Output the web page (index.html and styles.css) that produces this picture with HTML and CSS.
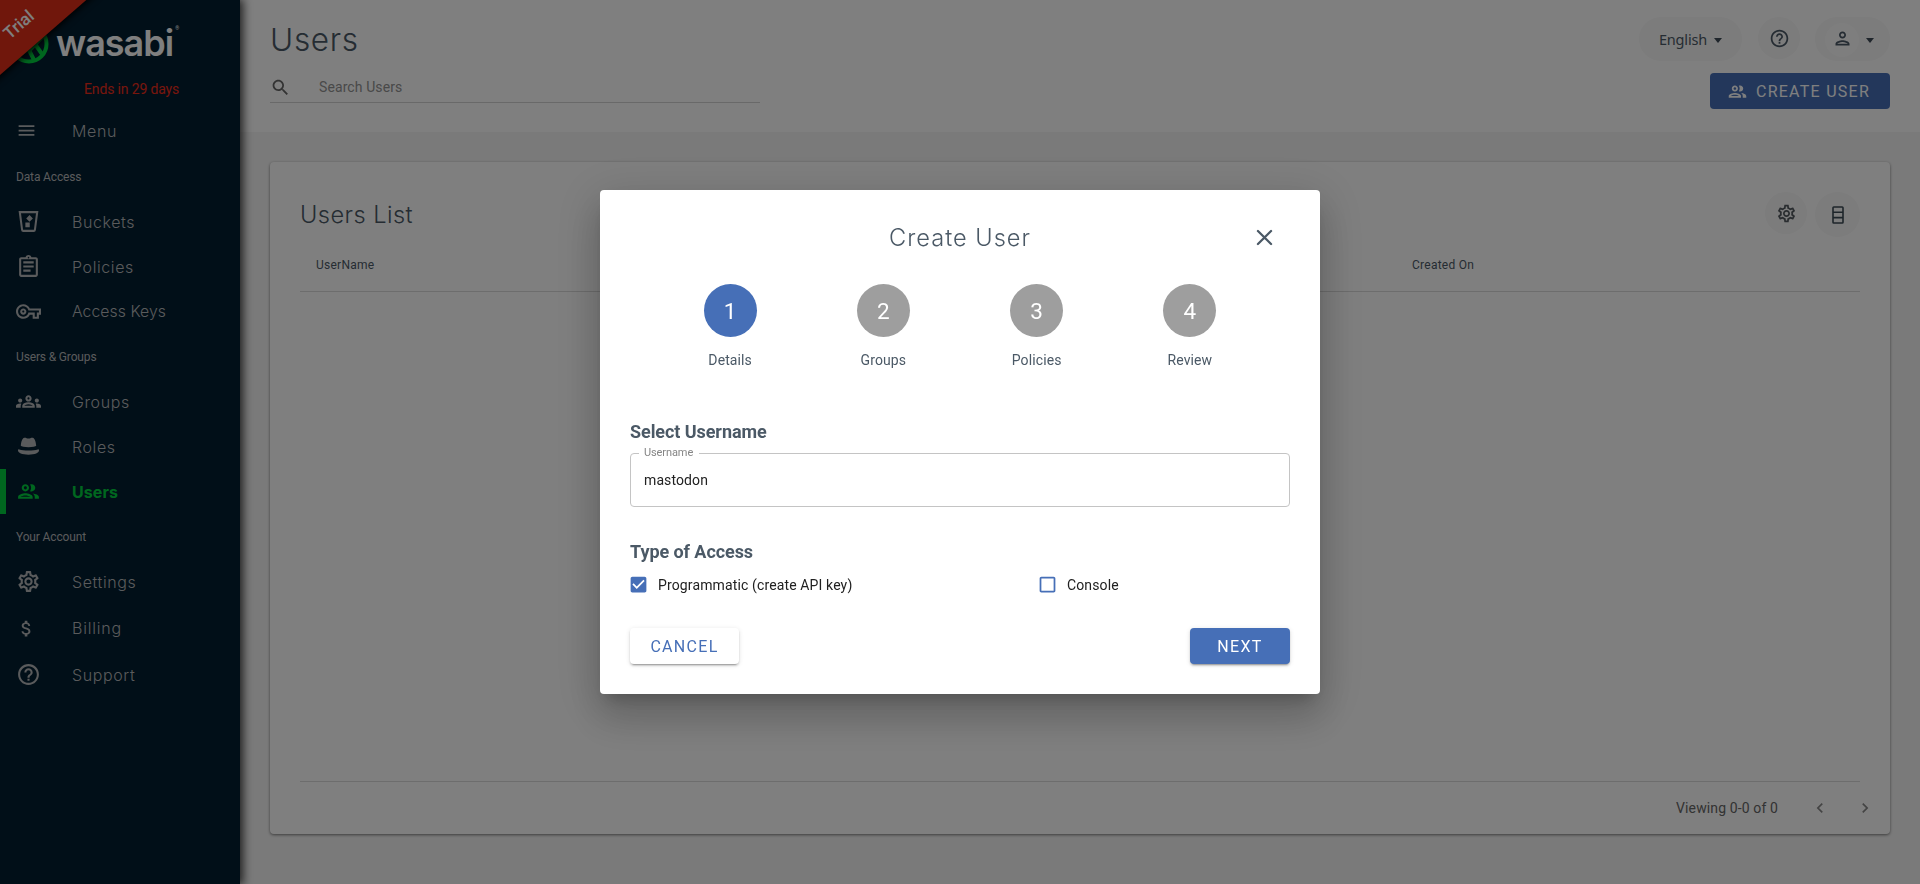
FILE: index.html
```html
<!DOCTYPE html>
<html lang="en">
<head>
<meta charset="utf-8">
<title>Wasabi Console - Users</title>
<link rel="stylesheet" href="styles.css">
</head>
<body>
<svg class="defs" aria-hidden="true">
  <symbol id="i-menu" viewBox="0 0 24 24"><path d="M3 18h18v-2H3v2zm0-5h18v-2H3v2zm0-7v2h18V6H3z"/></symbol>
  <symbol id="i-bucket" viewBox="0 0 24 24"><path fill-rule="evenodd" d="M2.500 2h19l-2.400 18.200a2 2 0 0 1-2 1.800H6.900a2 2 0 0 1-2-1.800zM4.800 4l2 16h10.400l2-16z"/><path d="M13 5.800l3.200 3.200L13 12.200 9.800 9zM9 13h4.200v4.500H9z"/></symbol>
  <symbol id="i-policy" viewBox="0 0 24 24"><path d="M7 15h7v2H7zm0-4h10v2H7zm0-4h10v2H7zm12-4h-4.180C14.400 1.840 13.300 1 12 1s-2.400.840-2.820 2H5c-1.100 0-2 .9-2 2v15c0 1.100.9 2 2 2h14c1.100 0 2-.9 2-2V5c0-1.100-.9-2-2-2zm-7-.250c.410 0 .750.340.750.750s-.340.750-.750.750-.750-.340-.750-.750.340-.750.750-.750zM19 20H5V5h14v15z"/></symbol>
  <symbol id="i-key" viewBox="0 0 24 24"><path d="M22 19h-6v-4h-2.680c-1.140 2.420-3.600 4-6.320 4-3.860 0-7-3.140-7-7s3.140-7 7-7c2.720 0 5.170 1.580 6.320 4H24v6h-2v4zm-4-2h2v-4h2v-2H11.940l-.230-.670C11.010 8.340 9.110 7 7 7c-2.760 0-5 2.240-5 5s2.240 5 5 5c2.110 0 4.010-1.340 4.710-3.330l.230-.670H18v4zM7 15c-1.650 0-3-1.350-3-3s1.350-3 3-3 3 1.350 3 3-1.350 3-3 3zm0-4c-.550 0-1 .450-1 1s.450 1 1 1 1-.450 1-1-.450-1-1-1z"/></symbol>
  <symbol id="i-groups" viewBox="0 0 24 24"><path d="M4 13c1.100 0 2-.9 2-2s-.9-2-2-2-2 .9-2 2 .9 2 2 2zm1.130 1.100C4.760 14.040 4.390 14 4 14c-.990 0-1.930.210-2.780.580C.480 14.900 0 15.620 0 16.430V18h4.500v-1.610c0-.830.230-1.610.630-2.290zM20 13c1.100 0 2-.9 2-2s-.9-2-2-2-2 .9-2 2 .9 2 2 2zm4 3.430c0-.810-.480-1.530-1.220-1.850C21.930 14.210 20.990 14 20 14c-.390 0-.760.040-1.130.1.400.680.630 1.460.630 2.290V18H24v-1.570zm-7.760-2.780C15.070 13.130 13.630 12.750 12 12.750s-3.070.390-4.240.9C6.680 14.130 6 15.210 6 16.390V18h12v-1.610c0-1.180-.680-2.260-1.760-2.740zM8.070 16c.090-.230.130-.390.910-.690.970-.380 1.990-.560 3.020-.560s2.050.180 3.020.560c.770.300.810.460.910.690H8.070zM12 8c.550 0 1 .450 1 1s-.450 1-1 1-1-.450-1-1 .450-1 1-1m0-2c-1.660 0-3 1.340-3 3s1.340 3 3 3 3-1.340 3-3-1.340-3-3-3z"/></symbol>
  <symbol id="i-hat" viewBox="0 0 24 24"><path d="M4.600 11.200C5 7.500 5.900 4.200 7.900 3.700c1.600-.3 2.500.7 4.100.7s2.500-1 4.100-.7c2 .5 2.900 3.800 3.300 7.500-.5.800-3.500 1.400-7.400 1.400s-6.900-.6-7.400-1.400zM3.100 14.800c2.300.7 5.300 1.100 8.900 1.100s6.600-.4 8.900-1.100c.8-.2 1.200.2 1.200.8.100 2.500-3.900 4.200-10.100 4.200S1.800 18.100 1.900 15.600c0-.6.400-1 1.200-.8z"/></symbol>
  <symbol id="i-users" viewBox="0 0 24 24"><path d="M9 12c1.930 0 3.500-1.570 3.500-3.500S10.930 5 9 5 5.500 6.570 5.500 8.500 7.070 12 9 12zm0-5c.830 0 1.500.670 1.500 1.500S9.830 10 9 10s-1.500-.670-1.500-1.500S8.170 7 9 7zm0 6.750c-2.340 0-7 1.170-7 3.500V19h14v-1.750c0-2.330-4.660-3.500-7-3.500zM4.340 17c.840-.580 2.870-1.250 4.660-1.250s3.820.670 4.660 1.250H4.340zm11.700-3.190c1.160.840 1.960 1.960 1.960 3.440V19h4v-1.750c0-2.020-3.500-3.170-5.960-3.440zM15 12c1.930 0 3.500-1.570 3.500-3.500S16.930 5 15 5c-.540 0-1.040.130-1.500.350.630.890 1 1.980 1 3.150s-.370 2.260-1 3.150c.460.220.960.350 1.500.350z"/></symbol>
  <symbol id="i-gear" viewBox="0 0 24 24"><path d="M19.430 12.980c.040-.320.070-.640.070-.980s-.030-.660-.070-.980l2.110-1.650c.190-.150.240-.420.120-.640l-2-3.460c-.090-.160-.260-.250-.440-.250-.060 0-.120.010-.170.030l-2.490 1c-.520-.400-1.080-.730-1.690-.980l-.380-2.650C14.460 2.180 14.250 2 14 2h-4c-.250 0-.460.180-.490.420l-.380 2.650c-.610.250-1.170.590-1.690.980l-2.490-1c-.060-.020-.120-.030-.180-.030-.170 0-.340.090-.430.250l-2 3.460c-.130.220-.070.490.120.640l2.110 1.650c-.040.320-.070.650-.070.980s.030.660.070.980l-2.110 1.650c-.190.150-.240.420-.120.640l2 3.460c.090.160.260.250.440.250.060 0 .120-.010.170-.030l2.490-1c.520.400 1.080.730 1.690.980l.380 2.650c.030.240.240.420.490.420h4c.250 0 .460-.180.490-.420l.380-2.650c.610-.250 1.170-.590 1.690-.980l2.490 1c.060.020.120.030.180.030.170 0 .340-.090.430-.250l2-3.460c.120-.220.070-.490-.120-.640l-2.110-1.650zm-1.980-1.710c.040.310.050.520.050.730 0 .210-.020.430-.050.730l-.140 1.130.890.700 1.080.840-.7 1.210-1.270-.510-1.040-.420-.9.680c-.430.320-.840.560-1.250.730l-1.060.430-.160 1.130-.200 1.350h-1.400l-.190-1.350-.160-1.130-1.060-.430c-.430-.180-.830-.410-1.230-.710l-.910-.7-1.060.430-1.270.510-.7-1.210 1.080-.840.890-.7-.140-1.130c-.030-.310-.050-.540-.050-.740s.020-.430.050-.730l.140-1.130-.890-.7-1.080-.840.7-1.210 1.270.510 1.040.420.900-.680c.430-.320.840-.560 1.250-.730l1.060-.430.160-1.130.200-1.350h1.390l.190 1.350.160 1.130 1.060.430c.430.180.830.410 1.230.710l.910.7 1.060-.430 1.270-.510.7 1.210-1.070.850-.890.7.140 1.130zM12 8c-2.210 0-4 1.790-4 4s1.790 4 4 4 4-1.790 4-4-1.790-4-4-4zm0 6c-1.100 0-2-.9-2-2s.9-2 2-2 2 .9 2 2-.9 2-2 2z"/></symbol>
  <symbol id="i-dollar" viewBox="0 0 24 24"><path d="M11.800 10.900c-2.270-.590-3-1.200-3-2.150 0-1.090 1.010-1.850 2.700-1.850 1.780 0 2.440.850 2.500 2.100h2.210c-.070-1.720-1.120-3.300-3.210-3.810V3h-3v2.160c-1.940.420-3.500 1.680-3.500 3.610 0 2.310 1.910 3.460 4.700 4.130 2.500.6 3 1.480 3 2.410 0 .690-.490 1.790-2.700 1.790-2.060 0-2.870-.920-2.980-2.100h-2.200c.120 2.190 1.760 3.420 3.680 3.830V21h3v-2.150c1.950-.370 3.500-1.500 3.500-3.550 0-2.840-2.430-3.810-4.700-4.400z"/></symbol>
  <symbol id="i-help" viewBox="0 0 24 24"><path d="M11 18h2v-2h-2v2zm1-16C6.480 2 2 6.480 2 12s4.480 10 10 10 10-4.480 10-10S17.520 2 12 2zm0 18c-4.410 0-8-3.590-8-8s3.590-8 8-8 8 3.590 8 8-3.590 8-8 8zm0-14c-2.210 0-4 1.790-4 4h2c0-1.100.9-2 2-2s2 .9 2 2c0 2-3 1.750-3 5h2c0-2.250 3-2.500 3-5 0-2.210-1.790-4-4-4z"/></symbol>
  <symbol id="i-search" viewBox="0 0 24 24"><path d="M15.500 14h-.790l-.280-.270C15.410 12.590 16 11.110 16 9.500 16 5.910 13.090 3 9.500 3S3 5.910 3 9.500 5.910 16 9.500 16c1.610 0 3.090-.590 4.230-1.570l.270.280v.790l5 4.990L20.490 19l-4.990-5zm-6 0C7.010 14 5 11.990 5 9.500S7.010 5 9.500 5 14 7.010 14 9.500 11.990 14 9.500 14z"/></symbol>
  <symbol id="i-person" viewBox="0 0 24 24"><path d="M12 6c1.100 0 2 .9 2 2s-.9 2-2 2-2-.9-2-2 .9-2 2-2m0 10c2.700 0 5.800 1.290 6 2H6c.230-.720 3.310-2 6-2m0-12C9.790 4 8 5.790 8 8s1.790 4 4 4 4-1.790 4-4-1.790-4-4-4zm0 10c-2.670 0-8 1.340-8 4v2h16v-2c0-2.660-5.330-4-8-4z"/></symbol>
  <symbol id="i-left" viewBox="0 0 24 24"><path d="M15.410 7.410L14 6l-6 6 6 6 1.410-1.410L10.830 12z"/></symbol>
  <symbol id="i-right" viewBox="0 0 24 24"><path d="M10 6L8.590 7.410 13.170 12l-4.580 4.590L10 18l6-6z"/></symbol>
  <symbol id="i-close" viewBox="0 0 24 24"><path d="M4.500 4.500l15 15M19.500 4.500l-15 15" stroke="currentColor" stroke-width="2.600" stroke-linecap="round"/></symbol>
  <symbol id="i-checked" viewBox="0 0 24 24"><path d="M19 3H5c-1.110 0-2 .9-2 2v14c0 1.100.890 2 2 2h14c1.110 0 2-.9 2-2V5c0-1.100-.890-2-2-2zm-9 14l-5-5 1.410-1.410L10 14.170l7.590-7.590L19 8l-9 9z"/></symbol>
  <symbol id="i-unchecked" viewBox="0 0 24 24"><path d="M19 5v14H5V5h14m0-2H5c-1.100 0-2 .9-2 2v14c0 1.100.9 2 2 2h14c1.100 0 2-.9 2-2V5c0-1.100-.9-2-2-2z"/></symbol>
</svg>

<div class="app">
  <nav class="sidebar">
    <div class="brand">
      <svg class="brand-mark" viewBox="0 0 40 40"><circle cx="20" cy="20" r="17.500"/><path d="M20 3v12M20 24L7 34M19 24l6 12M26 20l7 10M21 26l15-16M30 6v10"/></svg>
      <span class="brand-name">wasabi</span><span class="brand-reg">®</span>
    </div>
    <div class="ends">Ends in 29 days</div>
    <a class="item menu"><svg class="icon small"><use href="#i-menu"/></svg><span>Menu</span></a>
    <h6 class="section">Data Access</h6>
    <a class="item"><svg class="icon"><use href="#i-bucket"/></svg><span>Buckets</span></a>
    <a class="item"><svg class="icon"><use href="#i-policy"/></svg><span>Policies</span></a>
    <a class="item tight"><svg class="icon"><use href="#i-key"/></svg><span>Access Keys</span></a>
    <h6 class="section">Users &amp; Groups</h6>
    <a class="item"><svg class="icon"><use href="#i-groups"/></svg><span>Groups</span></a>
    <a class="item"><svg class="icon"><use href="#i-hat"/></svg><span>Roles</span></a>
    <a class="item active"><svg class="icon"><use href="#i-users"/></svg><span>Users</span></a>
    <h6 class="section">Your Account</h6>
    <a class="item"><svg class="icon"><use href="#i-gear"/></svg><span>Settings</span></a>
    <a class="item billing"><svg class="icon small"><use href="#i-dollar"/></svg><span>Billing</span></a>
    <a class="item"><svg class="icon"><use href="#i-help"/></svg><span>Support</span></a>
    <div class="ribbon"><span>Trial</span></div>
  </nav>

  <main class="main">
    <header class="header">
      <div class="header-left">
        <h1>Users</h1>
        <div class="search"><svg class="search-icon"><use href="#i-search"/></svg><span>Search Users</span></div>
      </div>
      <div class="header-right">
        <div class="tools">
          <div class="pill lang">English<i class="caret"></i></div>
          <div class="pill help"><svg><use href="#i-help"/></svg></div>
          <div class="pill account"><span class="avatar"><svg><use href="#i-person"/></svg></span><i class="caret"></i></div>
        </div>
        <button class="create"><svg><use href="#i-users"/></svg>CREATE USER</button>
      </div>
    </header>

    <section class="card">
      <div class="card-head">
        <h2>Users List</h2>
        <div class="card-tools">
          <span class="round gear"><svg><use href="#i-gear"/></svg></span>
          <span class="round rows"><svg viewBox="0 0 12 18"><path d="M1.800 1h8.400q.8 0 .8.8v14.400q0 .8-.8.8H1.800q-.8 0-.8-.8V1.800q0-.8.8-.8zM1 6.200h10M1 11.600h10"/></svg></span>
        </div>
      </div>
      <div class="columns"><span>UserName</span><span>Created On</span></div>
      <div class="rows-empty"></div>
      <footer class="pager"><span>Viewing 0-0 of 0</span><svg><use href="#i-left"/></svg><svg><use href="#i-right"/></svg></footer>
    </section>
  </main>
</div>

<div class="overlay">
  <div class="dialog">
    <div class="dialog-head"><h2>Create User</h2><svg class="close"><use href="#i-close"/></svg></div>
    <ol class="steps">
      <li class="current"><b>1</b><span>Details</span></li>
      <li><b>2</b><span>Groups</span></li>
      <li><b>3</b><span>Policies</span></li>
      <li><b>4</b><span>Review</span></li>
    </ol>
    <h3>Select Username</h3>
    <fieldset class="field"><legend>Username</legend><div>mastodon</div></fieldset>
    <h3 class="access">Type of Access</h3>
    <div class="checks">
      <label><svg><use href="#i-checked"/></svg>Programmatic (create API key)</label>
      <label><svg><use href="#i-unchecked"/></svg>Console</label>
    </div>
    <div class="actions"><button class="cancel">CANCEL</button><button class="next">NEXT</button></div>
  </div>
</div>
</body>
</html>
```
FILE: styles.css
```css
* { box-sizing: border-box; }
body { margin: 0; font-family: Roboto, sans-serif; font-size: 14px; color: #212121; overflow: hidden; }
h1, h2, h3, h6, ol { margin: 0; padding: 0; font-weight: 400; }
svg { display: block; fill: currentColor; flex: none; }
button { font: inherit; border: 0; padding: 0; }
.defs { position: absolute; width: 0; height: 0; }

.app { display: flex; height: 884px; background: #f5f5f5; }

/* Sidebar */
.sidebar { position: relative; z-index: 1; width: 240px; flex: none; overflow: hidden; background: #031e30; color: #b4b6b8; }
.app::before { content: ""; position: absolute; left: 0; top: 0; width: 240px; height: 884px; box-shadow: 2px 0 9px 1px rgba(0, 0, 0, .75); }
.brand { display: flex; height: 64px; padding: 24px 0 0 9px; color: #fff; }
.brand-mark { width: 40px; height: 40px; fill: none; stroke: #00ce3e; stroke-width: 4; }
.brand-name { margin-left: 7px; font: 600 36px/38px Inter, sans-serif; letter-spacing: -1px; }
.brand-reg { margin-left: 2px; font-size: 5px; line-height: 8px; }
.ends { margin: 16px 0 0 84px; height: 18px; line-height: 18px; letter-spacing: -.15px; color: #f02c1a; }
.item { display: flex; align-items: center; height: 45px; padding-left: 16px; font: 300 16px Inter, sans-serif; letter-spacing: .6px; }
.tight { font-size: 15.800px; letter-spacing: .05px; }
.item span { margin-left: 31px; }
.icon { width: 25px; height: 25px; }
.icon.small { width: 21px; height: 21px; }
.item .icon.small + span { margin-left: 35px; }
.menu { margin-top: 10px; }
.menu + .section { height: 46px; line-height: 48px; }
.billing { height: 48px; letter-spacing: .8px; }
.section { height: 45px; padding-left: 16px; font-size: 12px; line-height: 47px; letter-spacing: -.15px; }
.active { border-left: 6px solid #00ce3e; padding-left: 10px; color: #00ce3e; font-weight: 700; letter-spacing: .1px; }
.ribbon { position: absolute; left: -63px; top: -22px; width: 170px; height: 67px; padding: 31px 22px 0 0; background: #e02e18; box-shadow: 0 2px 7px #000; transform: rotate(-41deg); color: #fff; font: 500 17px/20px Roboto, sans-serif; text-align: center; }

/* Page header */
.main { flex: 1; }
.header { display: flex; justify-content: space-between; height: 132px; padding: 17px 30px 0; background: #fff; }
.header-left { width: 490px; }
.header h1 { height: 45px; font: 300 31.500px/46px Inter, sans-serif; letter-spacing: .7px; color: #4b5966; }
.search { display: flex; align-items: center; height: 41px; border-bottom: 1px solid #d2d2d2; color: #929292; letter-spacing: .1px; }
.search span { margin: 9px 0 0 28px; }
.search-icon { width: 21px; height: 21px; margin-top: 10px; color: #666; }
.tools { display: flex; justify-content: flex-end; align-items: flex-start; color: #4b5966; }
.pill { display: flex; align-items: center; height: 44px; border-radius: 22px; background: #f8f8f8; }
.lang { width: 103px; padding-left: 20px; font: 400 14.500px "Noto Sans", sans-serif; letter-spacing: -.2px; }
.caret { border: 4.500px solid transparent; border-top: 5px solid #3e4a56; border-bottom: 0; margin: 2px 0 0 7px; }
.help { justify-content: center; width: 42px; height: 42px; margin: 0 15px 0 16px; }
.help svg { width: 21px; height: 21px; }
.account { width: 75px; padding-left: 10px; }
.avatar { display: grid; place-items: center; width: 34px; height: 34px; margin-top: 2px; border-radius: 50%; background: #fdfdfd; }
.avatar svg { width: 21px; height: 21px; margin-top: -3px; }
.create { display: flex; align-items: center; width: 180px; height: 36px; margin: 12px 0 0 auto; padding-left: 17px; gap: 8px; border-radius: 4px; background: #466fb7; color: #fff; font-size: 16px; letter-spacing: 1.250px; }
.create svg { width: 21px; height: 21px; }

/* Users card */
.card { display: flex; flex-direction: column; height: 672px; margin: 30px 30px 0; padding: 30px 30px 0; border-radius: 4px; background: #fff; box-shadow: 0 1px 3px rgba(0, 0, 0, .5); }
.card-head { display: flex; justify-content: space-between; height: 48px; }
.card-head h2 { padding-top: 1px; font: 300 23.600px/44px Inter, sans-serif; letter-spacing: .45px; color: #4b5966; }
.card-tools { display: flex; gap: 8px; }
.round { display: grid; place-items: center; border-radius: 50%; background: #f8f8f8; color: #545b60; }
.gear { width: 42px; height: 42px; }
.gear svg { width: 21px; height: 21px; }
.rows { width: 45px; height: 45px; }
.rows svg { width: 12px; height: 18px; fill: none; stroke: #3b4a54; stroke-width: 1.600; }
.columns { display: grid; grid-template-columns: 1096px 1fr; height: 52px; padding-left: 16px; line-height: 50px; font-size: 12px; color: #4b5966; border-bottom: 1px solid #dadada; letter-spacing: .25px; }
.rows-empty { flex: 1; border-bottom: 1px solid #dadada; }
.pager { display: flex; align-items: center; justify-content: flex-end; height: 52px; margin-right: -15px; color: #666; letter-spacing: .12px; }
.pager span { margin-right: 32px; }
.pager svg { width: 20px; height: 20px; color: #888; }
.pager svg + svg { margin-left: 25px; }

/* Dialog */
.overlay { position: fixed; z-index: 2; inset: 0; display: grid; place-items: center; background: rgba(0, 0, 0, .5); }
.dialog { width: 720px; height: 504px; padding: 30px; border-radius: 4px; background: #fff; box-shadow: 0 11px 15px -7px rgba(0,0,0,.2), 0 24px 38px 3px rgba(0,0,0,.14), 0 9px 46px 8px rgba(0,0,0,.12); }
.dialog-head { display: flex; align-items: center; height: 36px; color: #4b5966; }
.dialog-head h2 { flex: 1; margin-top: -2px; padding-left: 36px; text-align: center; font: 300 23.600px Inter, sans-serif; letter-spacing: 1px; }
.close { width: 21px; height: 21px; margin: -2px 15px 0 0; }
.steps { display: flex; list-style: none; height: 137px; padding: 28px 23.500px 0; }
.steps li { flex: 1; display: flex; flex-direction: column; align-items: center; color: #4b5966; }
.steps b { width: 53px; height: 53px; border-radius: 50%; background: #9e9e9e; color: #fff; text-align: center; font-weight: 400; font-size: 22.500px; line-height: 54px; }
.steps .current b { background: #466fb7; }
.steps span { margin-top: 14px; line-height: 18px; letter-spacing: .1px; }
.dialog h3 { height: 24px; margin-top: 27px; font-size: 18px; line-height: 24px; font-weight: 700; letter-spacing: -.07px; color: #4b5966; }
.field { margin: 3px 0 0; height: 60px; padding: 0 13px; border: 1px solid #c4c4c4; border-radius: 4px; color: #212121; }
.field legend { height: 12px; padding: 0 6px 0 5px; margin-left: -5px; font-size: 11px; line-height: 12px; letter-spacing: -.1px; color: #858585; }
.field div { height: 40px; margin-top: 1px; line-height: 41px; letter-spacing: .1px; }
.dialog h3.access { margin-top: 33px; }
.checks { display: flex; margin-top: 10px; letter-spacing: .13px; }
.checks label { display: flex; align-items: center; width: 409px; gap: 9px; margin-left: -2px; }
.checks label + label { width: auto; margin-left: 0; }
.checks svg { width: 21px; height: 21px; color: #466fb7; }
.actions { display: flex; justify-content: space-between; margin-top: 33px; }
.actions button { width: 100px; height: 36px; border-radius: 4px; font-size: 16px; letter-spacing: 1.300px; background: #466fb7; color: #fff; box-shadow: 0 3px 1px -2px rgba(0,0,0,.2), 0 2px 2px rgba(0,0,0,.14), 0 1px 5px rgba(0,0,0,.12); }
.actions .cancel { width: 109px; background: #fff; color: #466fb7; }
```
